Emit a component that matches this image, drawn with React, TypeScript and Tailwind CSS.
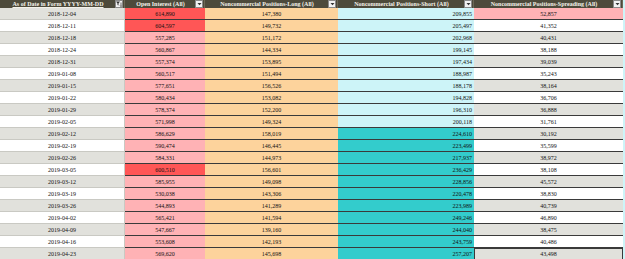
import React from "react";

type Row = {
  date: string;
  oi: string;
  long: string;
  short: string;
  spread: string;
  oiHot?: boolean;
  shortHot?: boolean;
  spreadHot?: boolean;
};

const rows: Row[] = [
  { date: "2018-12-04", oi: "614,890", long: "147,380", short: "209,855", spread: "52,857", oiHot: true, spreadHot: true },
  { date: "2018-12-11", oi: "604,597", long: "149,732", short: "205,497", spread: "41,352", oiHot: true },
  { date: "2018-12-18", oi: "557,285", long: "151,172", short: "202,968", spread: "40,431" },
  { date: "2018-12-24", oi: "560,867", long: "144,334", short: "199,145", spread: "38,188" },
  { date: "2018-12-31", oi: "557,374", long: "153,895", short: "197,434", spread: "39,039" },
  { date: "2019-01-08", oi: "560,517", long: "151,494", short: "188,987", spread: "35,243" },
  { date: "2019-01-15", oi: "577,651", long: "156,526", short: "188,178", spread: "38,164" },
  { date: "2019-01-22", oi: "580,434", long: "153,082", short: "194,828", spread: "36,706" },
  { date: "2019-01-29", oi: "578,374", long: "152,200", short: "196,310", spread: "36,888" },
  { date: "2019-02-05", oi: "571,998", long: "149,324", short: "200,118", spread: "31,761" },
  { date: "2019-02-12", oi: "586,629", long: "158,019", short: "224,610", spread: "30,192", shortHot: true },
  { date: "2019-02-19", oi: "590,474", long: "146,445", short: "223,499", spread: "35,599", shortHot: true },
  { date: "2019-02-26", oi: "584,331", long: "144,973", short: "217,937", spread: "38,972", shortHot: true },
  { date: "2019-03-05", oi: "600,510", long: "156,601", short: "236,429", spread: "38,108", oiHot: true, shortHot: true },
  { date: "2019-03-12", oi: "585,955", long: "149,098", short: "228,856", spread: "45,572", shortHot: true },
  { date: "2019-03-19", oi: "530,038", long: "143,306", short: "220,478", spread: "38,830", shortHot: true },
  { date: "2019-03-26", oi: "544,893", long: "141,289", short: "223,989", spread: "40,739", shortHot: true },
  { date: "2019-04-02", oi: "565,421", long: "141,594", short: "249,246", spread: "46,890", shortHot: true },
  { date: "2019-04-09", oi: "547,667", long: "139,160", short: "244,040", spread: "38,475", shortHot: true },
  { date: "2019-04-16", oi: "553,608", long: "142,193", short: "243,759", spread: "40,486", shortHot: true },
  { date: "2019-04-23", oi: "569,620", long: "145,698", short: "257,207", spread: "43,498", shortHot: true },
];

const grid = "grid grid-cols-[125px_80px_133px_136px_149px_2px]";

function DropButton({ filter = false }: { filter?: boolean }) {
  return (
    <span className="absolute right-[1px] top-[0px] flex h-[8px] w-[8px] items-center justify-center border border-[#8a8a8a] bg-[#f2f2f2]">
      {filter ? (
        <svg width="6" height="6" viewBox="0 0 6 6">
          <path d="M0 0.5h4l-1.5 2v2l-1 -0.5v-1.5z" fill="#333" />
          <path d="M5 1.5v4M4 4.5l1 1l1 -1" stroke="#333" strokeWidth="0.7" fill="none" />
        </svg>
      ) : (
        <svg width="5" height="4" viewBox="0 0 5 4">
          <path d="M0.5 1h4l-2 2.2z" fill="#333" />
        </svg>
      )}
    </span>
  );
}

function HeaderCell({ label, underline = false, filter = false }: { label: string; underline?: boolean; filter?: boolean }) {
  return (
    <div className="relative flex h-[8px] items-center justify-center border-r border-[#6b6756] pr-[8px]">
      <span className={`whitespace-nowrap text-[6px] font-bold leading-none text-[#f4f2ea] ${underline ? "underline" : ""}`}>
        {label}
      </span>
      <DropButton filter={filter} />
    </div>
  );
}

export default function App() {
  return (
    <div className="h-[259px] w-[625px] overflow-hidden bg-white font-['Liberation_Serif','Times_New_Roman',serif] text-[#111]">
      <div className={`${grid} bg-[#4d4a3b]`}>
        <HeaderCell label="As of Date in Form YYYY-MM-DD" underline filter />
        <HeaderCell label="Open Interest (All)" />
        <HeaderCell label="Noncommercial Positions-Long (All)" />
        <HeaderCell label="Noncommercial Positions-Short (All)" />
        <HeaderCell label="Noncommercial Positions-Spreading (All)" />
        <div className="bg-[#cdf4f8]" />
      </div>
      {rows.map((r, i) => {
        const odd = i % 2 === 0;
        const last = i === rows.length - 1;
        const plain = odd ? "bg-[#e1e1dc]" : "bg-white";
        return (
          <div key={r.date} className={`${grid} h-[12px] text-[6px] leading-none`}>
            <div className={`flex items-center justify-center border-b border-r border-[#c9c9c3] ${plain}`}>{r.date}</div>
            <div className={`flex items-center justify-center border-b border-[#3a3a3a] ${r.oiHot ? "bg-[#ff5656]" : "bg-[#ffb2b5]"}`}>
              {r.oi}
            </div>
            <div className="flex items-center justify-center border-b border-[#3a3a3a] bg-[#fdd39c]">{r.long}</div>
            <div className={`flex items-center justify-end border-b border-[#3a3a3a] pr-[2px] ${r.shortHot ? "bg-[#33cccc]" : "bg-[#cdf4f8]"}`}>
              {r.short}
            </div>
            <div
              className={`flex items-center justify-center border-b border-[#3a3a3a] ${r.spreadHot ? "bg-[#ffb2b5]" : plain} ${
                last ? "border border-[#1d4a2c]" : ""
              }`}
            >
              {r.spread}
            </div>
            <div className="bg-[#cdf4f8]" />
          </div>
        );
      })}
    </div>
  );
}
